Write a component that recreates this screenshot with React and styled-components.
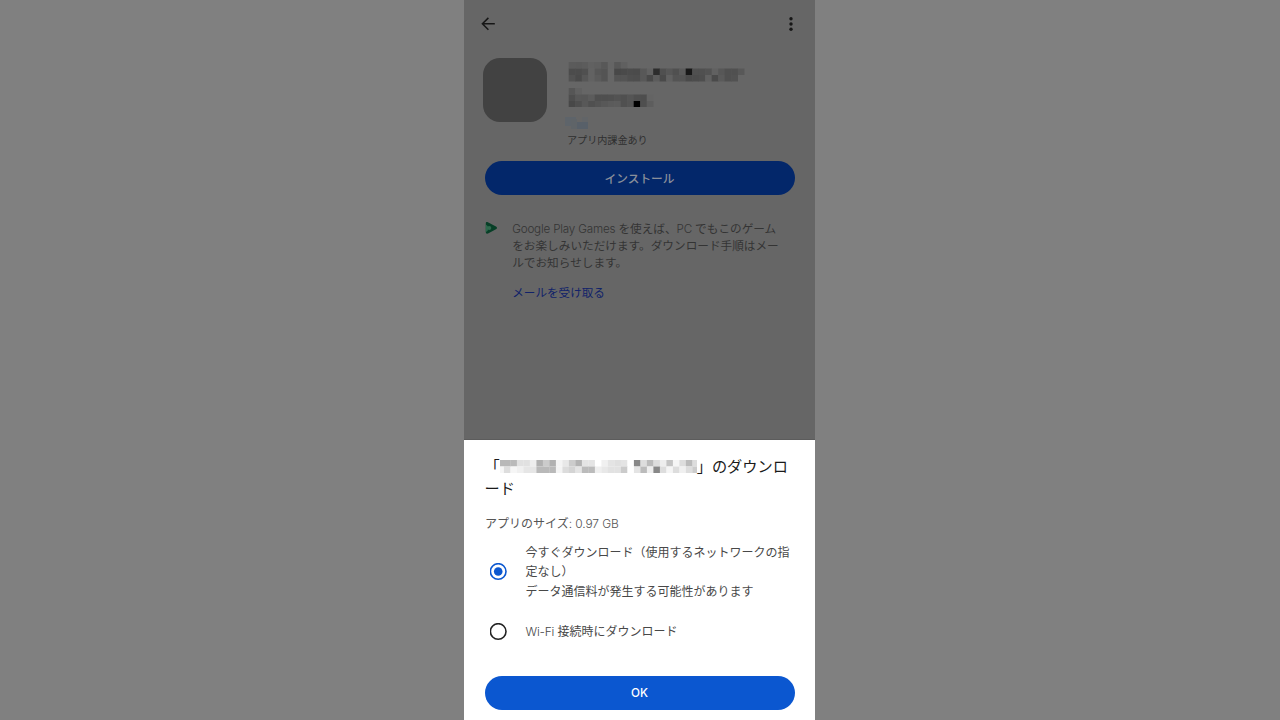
import React from 'react';
import styled, { createGlobalStyle, css } from 'styled-components';

const GlobalStyle = createGlobalStyle`
  * {
    box-sizing: border-box;
  }
  body {
    margin: 0;
    background: #808080;
    font-family: Inter, 'Noto Sans CJK JP', sans-serif;
    overflow: hidden;
  }
`;

const Page = styled.div`
  display: flex;
  justify-content: center;
  width: 1280px;
  height: 720px;
  padding-right: 1px;
  background: #808080;
`;

const Phone = styled.div`
  display: flex;
  flex-direction: column;
  width: 351px;
  height: 720px;
  background: #666;
`;

const Backdrop = styled.div`
  display: flex;
  flex-direction: column;
  height: 440px;
  border-bottom: 1px solid #5c5c5c;
`;

const TopBar = styled.header`
  display: flex;
  justify-content: space-between;
  align-items: center;
  height: 48px;
  padding: 0 14px;
`;

const AppInfo = styled.section`
  display: flex;
  gap: 18px;
  height: 113.4px;
  padding: 10px 0 0 19px;
`;

const AppIcon = styled.div`
  flex: none;
  width: 63.4px;
  height: 63.6px;
  margin: 0.4px 0.4px 0 0.2px;
  border-radius: 17px;
  background: #424242;
`;

const AppMeta = styled.div`
  display: flex;
  flex-direction: column;
`;

const Billing = styled.div`
  margin: 3px 0 0 2px;
  color: #2f2f2f;
  font-size: 10.1px;
  line-height: 16px;
`;

const PillButton = styled.button`
  display: block;
  flex: none;
  width: 310px;
  height: 33.6px;
  margin-left: 20.5px;
  padding: ${props => (props.$dimmed ? '2px 0 0' : 0)};
  border: 0;
  border-radius: 17px;
  background: ${props => (props.$dimmed ? '#03276a' : '#0b57d0')};
  color: ${props => (props.$dimmed ? '#8a8f9a' : '#fff')};
  font-family: inherit;
  font-size: 11.7px;
  font-weight: 500;
  line-height: ${props => (props.$dimmed ? '31px' : '34px')};
`;

const Promo = styled.section`
  display: flex;
  gap: 14.2px;
  padding: 26px 0 0 21px;
`;

const PromoText = styled.p`
  margin: 0;
  color: #343434;
  font-size: 11.65px;
  line-height: 17.2px;
  white-space: nowrap;
`;

const Latin = styled.span`
  font-weight: 300;
  letter-spacing: ${props => props.$tracking || '-0.18px'};
`;

const PromoLink = styled.a`
  display: block;
  margin-top: 11.2px;
  color: #112269;
  font-size: 11.6px;
  line-height: 18px;
`;

const Sheet = styled.section`
  display: flex;
  flex-direction: column;
  height: 280px;
  background: #fff;
`;

const SheetTitle = styled.h1`
  height: 60.4px;
  margin: 15.6px 0 0 20.5px;
  color: #1a1a1a;
  font-size: 15.2px;
  font-weight: 400;
  line-height: 22.5px;
  white-space: nowrap;
`;

const TitleLine = styled.div`
  display: flex;
  align-items: center;
  height: 22.3px;
`;

const SizeText = styled.div`
  height: 27px;
  margin-left: 21px;
  color: #555;
  font-size: 12px;
  line-height: 16px;
`;

const Option = styled.label`
  display: flex;
  align-items: center;
  gap: 19px;
  padding-left: 25.5px;
  color: #484848;
  font-size: 12px;
  line-height: 19.5px;
  white-space: nowrap;
  ${props => props.$last && css`
    margin: 20.5px 0 34.5px;
  `}
`;

const RadioSvg = styled.svg`
  flex: none;
`;

const MosaicSvg = styled.svg`
  display: block;
  flex: none;
  margin: ${props => props.$margin || 0};
`;

const CELL = 6.5;

// every row is a string of two-digit grey levels, ".." leaves the cell empty
const appNameRows = [
  '5b 5a 5c 61 5f 58 65 58 60 .. .. .. .. .. .. .. .. .. .. .. .. .. .. .. .. .. ..',
  '4c 4c 50 62 57 54 66 48 4a 4c 4b 58 62 2d 50 57 50 5a 18 50 50 53 61 57 50 50 58',
  '52 4a 57 62 5b 54 66 54 54 4f 4e 58 49 5c 4a 61 54 54 4a 4c 4e 61 4a 5a 50 52 ..',
];
const appNameRows2 = [
  '56 61 .. .. .. .. .. .. .. .. .. .. ..',
  '4e 58 57 5c 4f 4f 50 53 50 55 4f 4e 64',
  '48 4f 58 50 54 58 5b 5c 50 54 00 4f 5d',
];
const sheetNameRows = [
  'b8 b8 ba e1 e1 ee b1 cb b1 f4 e8 cc b3 e4 e4 ff f0 e4 e0 e4 ff 88 dd bb dd ee c4 f5 dd bb dd',
  'f6 dd f6 f0 e6 e6 b9 b9 b9 f4 dc d4 e4 bb bb ef e8 e2 e2 cb ff e4 bb ee 88 dd f5 dd f0 dd cc',
];

const Mosaic = ({ rows, offset = 0, width, margin }) => (
  <MosaicSvg width={width} height={rows.length * CELL} $margin={margin} aria-hidden="true">
    {rows.map((row, y) => row.split(' ').map((level, x) => level !== '..' && (
      <rect
        key={`${y}-${x}`}
        x={x * CELL - offset}
        y={y * CELL}
        width={CELL + 0.3}
        height={CELL}
        fill={`#${level}${level}${level}`}
      />
    )))}
  </MosaicSvg>
);

const BackIcon = () => (
  <svg width="20" height="20" viewBox="0 0 20 20" fill="none" stroke="#161616" strokeWidth="1.5">
    <path d="M16.8 9.8H4.6M10.4 3.9L4.4 9.8l6 6" />
  </svg>
);

const MoreIcon = () => (
  <svg width="20" height="20" viewBox="0 0 20 20" fill="#161616">
    <circle cx="10" cy="4.8" r="1.7" />
    <circle cx="10" cy="10" r="1.7" />
    <circle cx="10" cy="15.2" r="1.7" />
  </svg>
);

const PlayGamesIcon = () => (
  <svg width="13" height="14" viewBox="0 0 13 14" style={{ flex: 'none' }}>
    <path d="M.8 2.1Q.8.5 2.4 1.1L11.4 5.8Q12.8 7 11.4 8L3 12.5Q.8 13 .8 11.5Z" fill="#073f27" />
    <path d="M.8 3.6A4 4 0 0 1 .8 11Z" fill="#2b6a4c" />
    <circle cx="4.2" cy="7" r="2.1" fill="#31694e" />
  </svg>
);

const Radio = ({ checked }) => (
  <RadioSvg width="17" height="18" viewBox="0 0 17 18">
    <circle cx="8.2" cy="8.5" r="7.8" fill="none" stroke={checked ? '#0b57d0' : '#222'} strokeWidth="1.6" />
    {checked && <circle cx="8.2" cy="8.5" r="4.3" fill="#0b57d0" />}
  </RadioSvg>
);

export default function App() {
  return (
    <Page>
      <GlobalStyle />
      <Phone>
        <Backdrop>
          <TopBar>
            <BackIcon />
            <MoreIcon />
          </TopBar>
          <AppInfo>
            <AppIcon />
            <AppMeta>
              <Mosaic rows={appNameRows} width={180} offset={-0.7} margin="4px 0 0 3px" />
              <Mosaic rows={appNameRows2} width={90} offset={-0.7} margin="6px 0 0 3px" />
              <MosaicSvg width="24" height="12" $margin="10px 0 0" aria-hidden="true">
                <rect width="11" height="9" fill="#5e646a" />
                <rect x="6" y="2" width="6" height="10" fill="#5f6468" />
                <rect x="12" y="5" width="11" height="7" fill="#586069" />
                <rect x="17" width="6" height="5" fill="#626568" />
              </MosaicSvg>
              <Billing>アプリ内課金あり</Billing>
            </AppMeta>
          </AppInfo>
          <PillButton $dimmed>インストール</PillButton>
          <Promo>
            <PlayGamesIcon />
            <div>
              <PromoText>
                <Latin>Google Play Games </Latin>
                を使えば、
                <Latin>PC </Latin>
                でもこのゲーム
                <br />
                をお楽しみいただけます。ダウンロード手順はメー
                <br />
                ルでお知らせします。
              </PromoText>
              <PromoLink>メールを受け取る</PromoLink>
            </div>
          </Promo>
        </Backdrop>
        <Sheet>
          <SheetTitle>
            <TitleLine>
              「
              <Mosaic rows={sheetNameRows} offset={2.6} width={197} margin="-1px 0 0" />
              」のダウンロ
            </TitleLine>
            <TitleLine>ード</TitleLine>
          </SheetTitle>
          <SizeText>
            アプリのサイズ
            <Latin $tracking="-0.1px">: 0.97 GB</Latin>
          </SizeText>
          <Option>
            <Radio checked />
            <span>
              今すぐダウンロード（使用するネットワークの指
              <br />
              定なし）
              <br />
              データ通信料が発生する可能性があります
            </span>
          </Option>
          <Option $last>
            <Radio />
            <span>
              <Latin $tracking="-0.2px">Wi-Fi </Latin>
              接続時にダウンロード
            </span>
          </Option>
          <PillButton>OK</PillButton>
        </Sheet>
      </Phone>
    </Page>
  );
}
